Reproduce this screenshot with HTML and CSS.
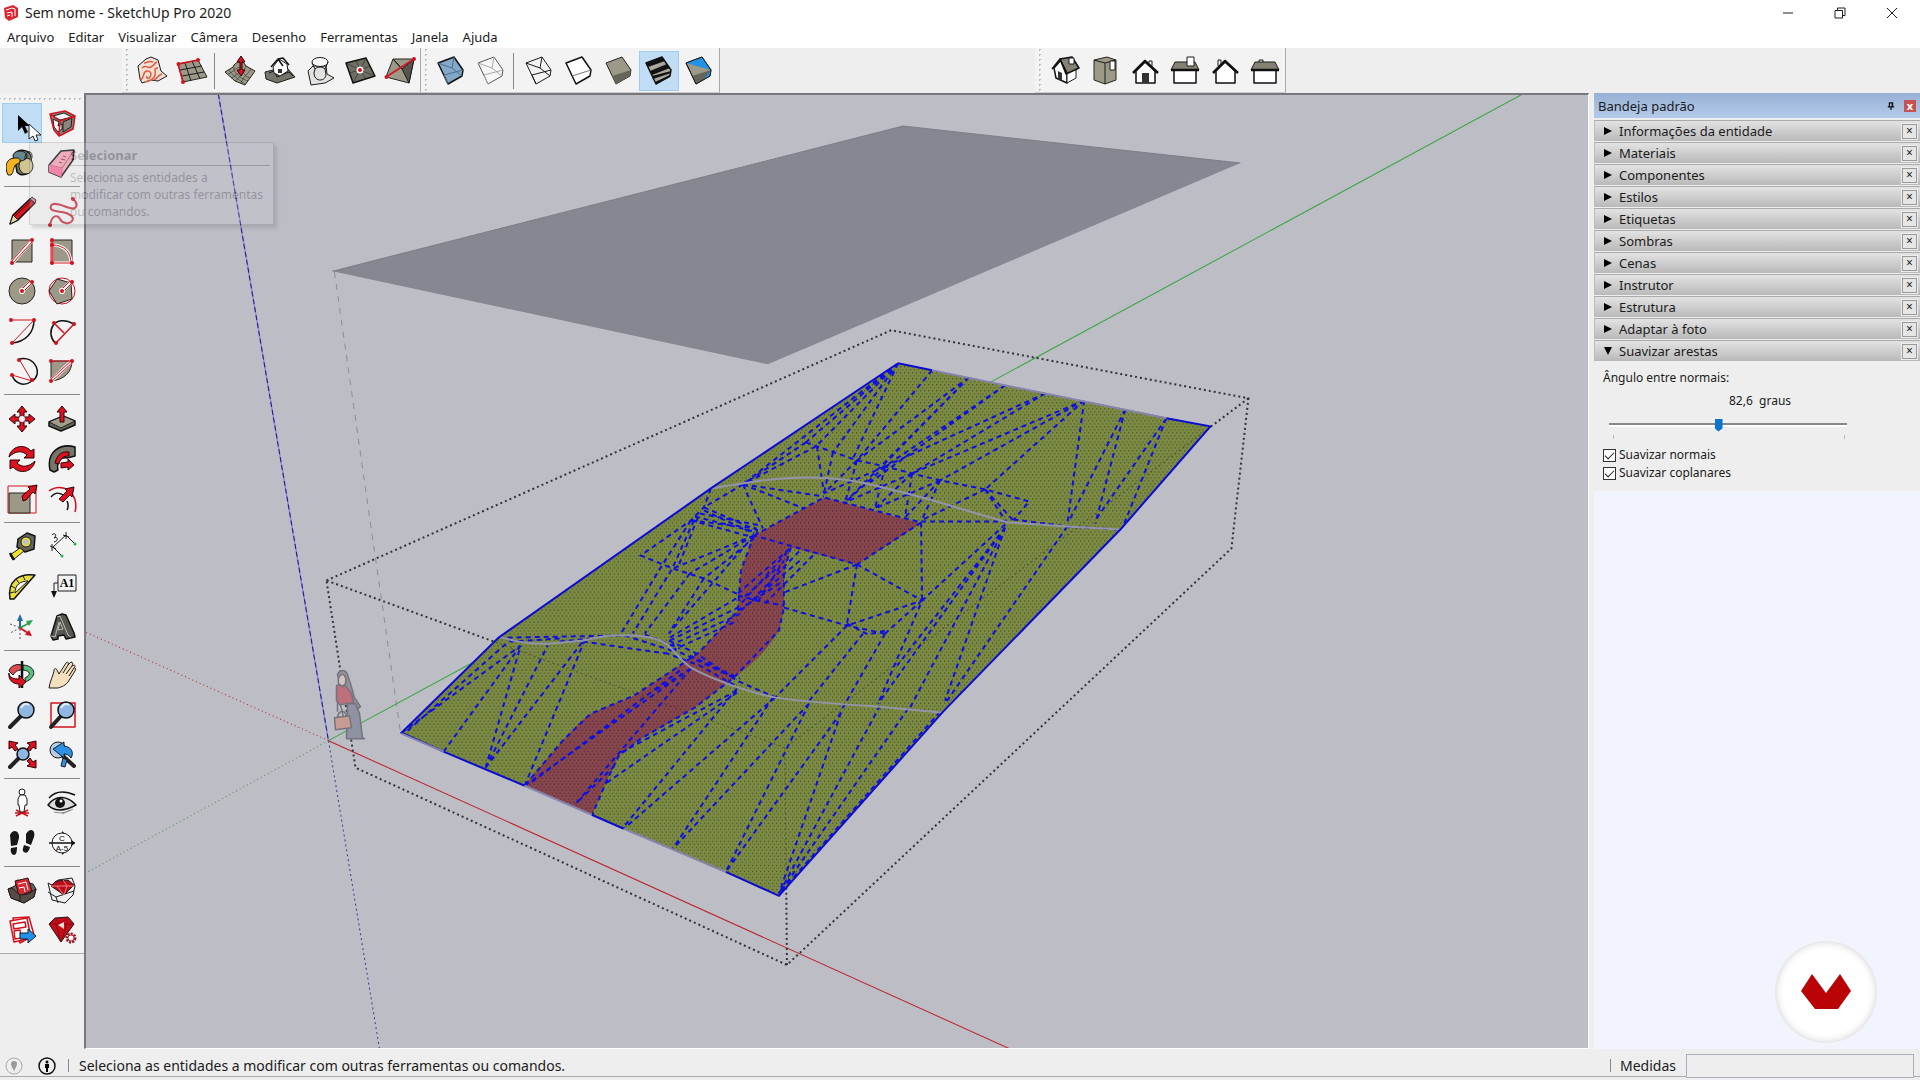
FILE: index.html
```html
<!DOCTYPE html>
<html lang="pt-BR">
<head>
    <meta charset="UTF-8">
    <meta name="viewport" content="width=device-width, initial-scale=1.0">
    <title>Sem nome - SketchUp Pro 2020</title>
    <link rel="stylesheet" href="styles.css">
</head>
<body>
    <header class="titlebar">
        <svg class="app-icon" viewBox="0 0 16 16"><path d="M1 3 10 0l5 3v9l-9 4-4-3z" fill="#d9252f"/><path d="M3 5l6-2 3 1v7M4 8l5-1v5M4 11l3-1" stroke="#fff" fill="none" stroke-width="1"/></svg>
        <h1>Sem nome - SketchUp Pro 2020</h1>
        <div class="window-buttons">
            <button aria-label="Minimizar"><svg viewBox="0 0 12 12"><path d="M1 6h10" class="k"/></svg></button>
            <button aria-label="Restaurar"><svg viewBox="0 0 12 12"><path d="M1 3.500h7.500v7.500H1zM3.500 3.500V1H11v7.500H8.500" class="k"/></svg></button>
            <button aria-label="Fechar"><svg viewBox="0 0 12 12"><path d="M1 1l10 10M11 1L1 11" class="k"/></svg></button>
        </div>
    </header>

    <nav class="menubar">
        <button>Arquivo</button>
        <button>Editar</button>
        <button>Visualizar</button>
        <button>Câmera</button>
        <button>Desenho</button>
        <button>Ferramentas</button>
        <button>Janela</button>
        <button>Ajuda</button>
    </nav>

    <div class="toolbars">
        <!-- caixa de areia -->
        <div class="toolbar">
            <button class="tool" aria-label="Usando contornos"><svg viewBox="0 0 32 32"><path d="M2 11l8-7 5-2 7 3 3 11 6 5-9 5-7-1-9 3-2-4z" fill="#eee0d5" class="k1"/><path d="M5 25c4-5 2-9 6-9s5 3 3 6-4 1-3-1M6 13c4-4 5 1 9-1s3-4 6-5M8 8c4 0 5-3 9-1M9 27c6-1 9-3 10-7s-2-7 3-7M18 25c4-2 4-5 8-6" class="o"/></svg></button>
            <button class="tool" aria-label="Usando rascunho"><svg viewBox="0 0 32 32"><path d="M2 9l20-4 9 17-24 5z" class="s"/><path d="M9 8l6 18M16 6l8 18M4 15l22-4M6 21l22-4" class="k1"/><path d="M7 27L2 9l20-4" class="rl2"/><circle cx="2.500" cy="9" r="2" class="r"/><circle cx="22" cy="5" r="2" class="r"/><circle cx="7" cy="27" r="2" class="r"/></svg></button>
            <span class="divider"></span>
            <button class="tool" aria-label="Suavizar"><svg viewBox="0 0 32 32"><path d="M1 17l8-5c2-6 11-7 13-1l9 5-10 14-10-4z" class="s"/><path d="M4 19c6-2 9-8 12-6s4 9 10 10M7 23c6-2 8-8 11-6M10 12c-1 5 5 11 14 14M22 11c-3 6-6 12-11 15M27 14c-3 5-8 8-10 14M5 15c2 4 9 9 16 14" class="k1 thin"/><path d="M17 1l4 6h-3v8h3l-4 6-4-6h3V7h-3z" class="ro"/></svg></button>
            <button class="tool" aria-label="Carimbar"><svg viewBox="0 0 32 32"><path d="M1 17l8-2 14-2 8 9-18 6-11-4z" fill="#77756a" class="k1"/><path d="M5 18l5-2 3 6 12-5 4 4" class="k1"/><path d="M9 12l6-8 8 5 1 7-8 5-6-3z" fill="#fff" class="k1"/><path d="M7 12l7-8 5 7M14 4l5-1 6 7" class="k2"/><path d="M14 14h4v4h-4z" fill="#333"/></svg></button>
            <button class="tool" aria-label="Projetar"><svg viewBox="0 0 32 32"><path d="M4 16l5-5h13l1 8 7 4-9 5-14 2z" fill="#e2e2de" class="k1"/><ellipse cx="16" cy="7" rx="8" ry="4.500" fill="#fafafa" class="k1"/><path d="M8 8l3 6-1 4c0 9 11 9 12 2l-1-6 3-7M11 14c3-3 8-2 10 0" class="k1"/></svg></button>
            <button class="tool" aria-label="Adicionar detalhe"><svg viewBox="0 0 32 32"><path d="M2 8l20-5 9 18-22 7z" fill="#706e62" class="k2"/><path d="M2 8l14 7L22 3M16 15l15 6M16 15L9 28M16 15L12 5M16 15l10-4M16 15l6 9M16 15L5 18" class="k1 thin"/><circle cx="16" cy="15" r="3.500" fill="#fff"/><circle cx="16" cy="15" r="2" class="r"/></svg></button>
            <button class="tool" aria-label="Virar aresta"><svg viewBox="0 0 32 32"><path d="M9 4L2 22l23 6 5-24z" class="s"/><path d="M9 4l9 10L30 4l-5 24-7-14z" fill="#57554b" class="k1"/><path d="M2 22L30 4" class="rl2"/><circle cx="2.500" cy="22" r="2" class="r"/><circle cx="30" cy="4" r="2" class="r"/></svg></button>
        </div>
        <!-- estilos de face -->
        <div class="toolbar">
            <button class="tool" aria-label="Raios X"><svg viewBox="0 0 32 32"><path d="M3 8l16-6 9 13-1 6-14 8z" fill="#84a9c8" class="k2"/><path d="M17 13l2-11M17 13l10 8M17 13L3 8M9 20l19-5M9 20l4 9" stroke="#4c6f8c" fill="none"/></svg></button>
            <button class="tool" aria-label="Arestas posteriores"><svg viewBox="0 0 32 32"><path d="M3 8l16-6 9 13-1 6-14 8z" fill="#f6f6f6" stroke="#555"/><path d="M17 13l2-11M17 13l10 8M17 13L3 8M9 20l19-5M9 20l4 9" stroke="#aaa" fill="none"/></svg></button>
            <span class="divider"></span>
            <button class="tool" aria-label="Aramado"><svg viewBox="0 0 32 32"><path d="M3 8l16-6 9 13-1 6-14 8zM17 13l2-11M17 13l10 8M17 13L3 8M9 20l19-5M9 20l4 9" class="k1"/></svg></button>
            <button class="tool" aria-label="Linhas ocultas"><svg viewBox="0 0 32 32"><path d="M3 8l16-6 9 13-1 6-14 8z" fill="#fff" class="k2"/><path d="M9 21l19-6" stroke="#777"/></svg></button>
            <button class="tool" aria-label="Sombreado"><svg viewBox="0 0 32 32"><path d="M3 8l16-6 9 13-1 6-14 8z" class="s"/><path d="M9 21l19-6-1 6-14 8z" fill="#67655a"/></svg></button>
            <button class="tool selected" aria-label="Sombreado com texturas"><svg viewBox="0 0 32 32"><path d="M3 8l16-6 9 13-1 6-14 8z" fill="#aaa69a" class="k2"/><path d="M3 8l16-6 3 4L5 12zM7 16l17-7 3 4L9 20zM9 21l19-5v2l-18 6zM12 27l15-7v2l-14 7z" fill="#111"/></svg></button>
            <button class="tool" aria-label="Monocromático"><svg viewBox="0 0 32 32"><path d="M3 8l16-6 9 13-1 6-14 8z" class="s"/><path d="M3 8l16-6 9 13z" fill="#2292e6"/><path d="M9 21l19-6-1 6-14 8z" fill="#67655a"/><path d="M28 15l-1 6-6 3z" fill="#2292e6"/><path d="M3 8l16-6 9 13-1 6-14 8z" class="k1"/></svg></button>
        </div>
        <!-- vistas -->
        <div class="toolbar views">
            <button class="tool" aria-label="Iso"><svg viewBox="0 0 32 32"><path d="M5 13l7-8 6 11v12L7 23z" fill="#fff" class="k2"/><path d="M18 16l9-4v11l-9 5z" fill="#fff" class="k1"/><path d="M11 4l12-2 7 11-13 6z" fill="#858174" class="k2"/><path d="M3 14l8-10 7 14" class="k2"/><path d="M9 16l4 2v8l-4-2z" fill="#333"/><path d="M20 3h5v6h-5z" fill="#fff" class="k1"/></svg></button>
            <button class="tool" aria-label="Topo"><svg viewBox="0 0 32 32"><path d="M5 5l13-3 9 3v20l-11 4-11-4z" class="s"/><path d="M16 8v21M5 5l11 3 11-3" class="k1"/><path d="M21 6h5v9h-5z" fill="#fff" class="k1"/></svg></button>
            <button class="tool" aria-label="Frente"><svg viewBox="0 0 32 32"><path d="M7 28V16l9-9 10 9v12z" fill="#fff" class="k2"/><path d="M4 18L16 6l13 12" class="k3"/><path d="M13 18h7v10h-7z" fill="#333"/><path d="M20 8V6h3v5" class="k1"/></svg></button>
            <button class="tool" aria-label="Direita"><svg viewBox="0 0 32 32"><path d="M5 15h22v13H5z" fill="#fff" class="k2"/><path d="M6 7h20l4 8H2z" fill="#858174" class="k1"/><path d="M2 15h28" class="k3"/><path d="M18 2h7v9h-7z" fill="#fff" class="k1"/></svg></button>
            <button class="tool" aria-label="Posterior"><svg viewBox="0 0 32 32"><path d="M7 28V16l9-9 10 9v12z" fill="#fff" class="k2"/><path d="M4 18L16 6l13 12" class="k3"/><path d="M9 11V5h3v4" class="k1"/></svg></button>
            <button class="tool" aria-label="Esquerda"><svg viewBox="0 0 32 32"><path d="M5 15h22v13H5z" fill="#fff" class="k2"/><path d="M6 7h20l4 8H2z" fill="#858174" class="k1"/><path d="M2 15h28" class="k3"/><path d="M10 7V5h4v2" class="k1"/></svg></button>
        </div>
    </div>

    <main class="workspace">
        <aside class="palette">
            <div class="tool-group">
                <button class="tool selected" aria-label="Selecionar"><svg viewBox="0 0 32 32"><path d="M12 8v16l4-4 3 7 3-2-3-6h5z" fill="#000"/></svg></button>
                <button class="tool" aria-label="Criar componente"><svg viewBox="0 0 32 32"><path d="M4 7l15-3 10 5-1 13-15 7-6-7z" fill="#8b887b"/><path d="M7 9l11-3 8 4-12 3zM7 12l6 3-1 4 4-2v5l-4 3-4-5z" fill="#f4f4f4" class="k1"/><path d="M17 15l9-4-1 9-8 5z" class="k1"/><path d="M4 7l15-3 10 5-15 5zM14 14l-1 15-5-6L4 7M29 9l-2 13-14 7" class="rl2"/></svg></button>
                <button class="tool" aria-label="Pintura"><svg viewBox="0 0 32 32"><path d="M8 8c4-7 16-6 17 2l1 10c-1 8-11 10-15 5z" fill="#777868" class="k2"/><ellipse cx="20" cy="19" rx="7" ry="8" fill="#cfc58e" class="k1"/><ellipse cx="14" cy="9" rx="7" ry="5" fill="#688891" class="k1"/><path d="M2 28c-4-8-2-17 7-17 7-1 6 5 2 6s-3 9-6 11z" fill="#f2b21e" class="k1"/><path d="M19 13c-1-9 8-12 7-2" class="k1"/></svg></button>
                <button class="tool" aria-label="Borracha"><svg viewBox="0 0 32 32"><path d="M3 18L15 4l13-1-1 10-12 17-12-5z" fill="#f6a1b5" class="k2"/><path d="M3 18l13 3L27 5M16 21l-1 9" stroke="#a15467" fill="none"/><path d="M3 18l13 3-1 9-12-5z" fill="#fb6f9c"/><path d="M13 15l3 1M15 12l4 1M17 9l3 1" stroke="#83334a"/></svg></button>
            </div>
            <div class="tool-group">
                <button class="tool" aria-label="Linha"><svg viewBox="0 0 32 32"><path d="M4 29l3-9L24 4l5 4-17 17z" fill="#d9161f" class="k2"/><path d="M7 20l5 5-8 4z" fill="#e9dda3" class="k1"/><path d="M24 4l2-2 4 3-1 3z" fill="#e3858b" class="k1"/><path d="M9 21L25 6" stroke="#5a0c0e"/></svg></button>
                <button class="tool" aria-label="Mão livre"><svg viewBox="0 0 32 32"><path d="M27 4c6 5 4 11-3 9C17 11 7 6 5 11s4 5 11 6 13 5 10 9-10 2-12-2-8-5-10 6" stroke="#c6303f" stroke-width="2" fill="none"/><circle cx="27" cy="4" r="2" class="r"/><circle cx="4" cy="30" r="2" class="r"/></svg></button>
                <button class="tool" aria-label="Retângulo"><svg viewBox="0 0 32 32"><path d="M6 5h20v22H6z" class="s"/><path d="M6 28L26 5" stroke="#fff" stroke-width="4"/><path d="M5 27L25 4M7 28L27 6" class="rl"/><circle cx="26" cy="5" r="2" class="r"/><circle cx="6" cy="28" r="2" class="r"/></svg></button>
                <button class="tool" aria-label="Retângulo girado"><svg viewBox="0 0 32 32"><path d="M6 5h20v23H6z" class="s"/><path d="M6 10c13 0 19 8 19 18H6V5" stroke="#fff" stroke-width="3" fill="none"/><path d="M6 10c13 0 19 8 19 18H6V5" class="rl"/><path d="M5 5h2v23H5z" class="rl"/><circle cx="6" cy="5" r="2" class="r"/><circle cx="6" cy="10" r="2" class="r"/><circle cx="6" cy="28" r="2" class="r"/><circle cx="26" cy="28" r="2" class="r"/></svg></button>
                <button class="tool" aria-label="Círculo"><svg viewBox="0 0 32 32"><circle cx="16" cy="16" r="13" class="s"/><path d="M16 16l9-9" stroke="#fff" stroke-width="4"/><path d="M15 15l9-9M17 17l9-9" class="rl"/><circle cx="16" cy="16" r="3" fill="#fff"/><circle cx="16" cy="16" r="2" class="r"/><circle cx="26" cy="7" r="2" class="r"/></svg></button>
                <button class="tool" aria-label="Polígono"><svg viewBox="0 0 32 32"><circle cx="16" cy="16" r="13" class="rl"/><path d="M3 16l8-12 14 4 1 16-15 5z" class="s"/><path d="M16 16l9-9" stroke="#fff" stroke-width="4"/><path d="M15 15l9-9M17 17l9-9" class="rl"/><circle cx="16" cy="16" r="3" fill="#fff"/><circle cx="16" cy="16" r="2" class="r"/><circle cx="26" cy="7" r="2" class="r"/></svg></button>
                <button class="tool" aria-label="Arco"><svg viewBox="0 0 32 32"><path d="M28 5c0 13-9 22-22 23" class="k2"/><path d="M5 5h23L6 28" class="rl"/><circle cx="5" cy="5" r="2" class="r"/><circle cx="28" cy="5" r="2" class="r"/><circle cx="6" cy="28" r="2" class="r"/></svg></button>
                <button class="tool" aria-label="Arco de dois pontos"><svg viewBox="0 0 32 32"><path d="M9 28C-1 17 8-2 28 9" class="k2"/><path d="M10 28L28 9M8 8l10 10" class="rl2"/><circle cx="8" cy="8" r="2" class="r"/><circle cx="28" cy="9" r="2" class="r"/><circle cx="10" cy="28" r="2" class="r"/></svg></button>
                <button class="tool" aria-label="Arco de três pontos"><svg viewBox="0 0 32 32"><path d="M13 4c17-4 24 16 13 22-9 7-18 1-20-6" class="k2"/><path d="M13 4l13 22L6 20" class="rl"/><circle cx="13" cy="5" r="2" class="r"/><circle cx="6" cy="20" r="2" class="r"/><circle cx="26" cy="25" r="2" class="r"/></svg></button>
                <button class="tool" aria-label="Pizza"><svg viewBox="0 0 32 32"><path d="M5 6h21c0 11-8 19-21 20z" class="s"/><path d="M5 26L26 6" stroke="#fff" stroke-width="4"/><path d="M5 6h21M4 25L26 5M5 27L27 7" class="rl"/><circle cx="5" cy="6" r="2" class="r"/><circle cx="26" cy="6" r="2" class="r"/><circle cx="5" cy="26" r="2" class="r"/></svg></button>
            </div>
            <div class="tool-group">
                <button class="tool" aria-label="Mover"><svg viewBox="0 0 32 32"><path d="M16 3l5 6h-3v5h5v-3l6 5-6 5v-3h-5v5h3l-5 6-5-6h3v-5H9v3l-6-5 6-5v3h5V9h-3z" class="ro"/><circle cx="16" cy="16" r="3" fill="#f3f3f3"/></svg></button>
                <button class="tool" aria-label="Empurrar/Puxar"><svg viewBox="0 0 32 32"><path d="M3 19l14-6 12 5v4l-14 6-12-5z" fill="#68665b" class="k2"/><path d="M3 19l14-6 12 5-14 7z" fill="#a19d8d" class="k1"/><path d="M16 3l5 6h-3v10h-4V9h-3z" class="ro"/></svg></button>
                <button class="tool" aria-label="Rotar"><svg viewBox="0 0 32 32"><path d="M3 14C5 3 18 0 25 8l3-2v9H18l3-3C16 7 9 8 3 14zM29 18c-2 11-15 14-22 6l-3 2v-9h10l-3 3c5 5 12 4 18-2z" class="ro"/></svg></button>
                <button class="tool" aria-label="Siga-me"><svg viewBox="0 0 32 32"><path d="M4 27C0 8 15 0 29 4v9l-8 2c-6-1-11 3-9 12l-4 2z" fill="#77756a" class="k2"/><path d="M9 20c2-9 8-12 14-11v4c-6 0-9 3-10 8z" class="ro"/><path d="M15 20l7-1v-3l6 6-6 5v-3l-7 1z" class="ro"/></svg></button>
                <button class="tool" aria-label="Escala"><svg viewBox="0 0 32 32"><path d="M2 3h28v27H2z" class="rl"/><path d="M3 10h21v20H3z" class="s"/><path d="M16 13l8-7-2-2 9-2-2 9-2-2-7 8-3 1z" class="ro"/></svg></button>
                <button class="tool" aria-label="Equidistância"><svg viewBox="0 0 32 32"><path d="M3 8C16-2 34 10 29 29" class="rl2"/><path d="M5 14c5-6 9-4 12-2M21 18c2 4 1 7 0 9" class="k2"/><path d="M13 16l8-8-2-2 9-2-2 10-2-2-7 7z" class="ro"/></svg></button>
            </div>
            <div class="tool-group">
                <button class="tool" aria-label="Fita métrica"><svg viewBox="0 0 32 32"><path d="M12 8l9-6 8 3-1 13-9 3-8-5z" fill="#63625b" class="k2"/><circle cx="20" cy="11" r="5" fill="#f0e22c" class="k1"/><circle cx="20" cy="11" r="3" fill="#bcc3c7"/><path d="M14 17l4 3L7 29l-3-5z" fill="#f0e22c" class="k1"/><path d="M4 22l4 7" class="k3"/></svg></button>
                <button class="tool" aria-label="Dimensão"><svg viewBox="0 0 32 32"><path d="M7 16L20 4M20 4l9 9M7 16l9 9M4 15l6 3M17 4l6 2M20 1v7M6 13v7" class="k1"/><path d="M6 4c2-3 6 0 2 3 4-2 5 3 0 4" class="k1"/><circle cx="29" cy="13" r="1.500" fill="#2daf42"/><circle cx="16" cy="25" r="1.500" fill="#2daf42"/></svg></button>
                <button class="tool" aria-label="Transferidor"><svg viewBox="0 0 32 32"><path d="M4 28C1 10 13 2 29 4L8 28z" fill="#e9dd44" class="k2"/><path d="M9 22c0-8 5-12 13-12z" fill="#f3f3f3" class="k1"/><path d="M4 22l4-1M5 15l4 2M10 8l3 4M17 5l2 4" class="k1"/></svg></button>
                <button class="tool" aria-label="Texto"><svg viewBox="0 0 32 32"><path d="M12 4h18v16H12zM12 12H8v10" fill="none" class="k1"/><path d="M5 20h6l-3 7z" fill="#111"/><text x="21" y="16" text-anchor="middle" class="serif-label">A1</text></svg></button>
                <button class="tool" aria-label="Eixos"><svg viewBox="0 0 32 32"><path d="M4 13l11 4M14 18v10M14 17L4 22" stroke="#555" stroke-dasharray="2 2"/><path d="M14 17V8" stroke="#2469a8" stroke-width="2"/><path d="M14 3l3 7h-6z" fill="#2469a8"/><path d="M14 17l9-5" stroke="#2fa152" stroke-width="2"/><path d="M27 9l-7 1 3 5z" fill="#2fa152"/><path d="M14 17l8 5" stroke="#d3121f" stroke-width="2"/><path d="M26 25l-7-1 4-5z" class="r"/></svg></button>
                <button class="tool" aria-label="Texto 3D"><svg viewBox="0 0 32 32"><path d="M5 25l6-20 5-2 4 1 8 18 1 4-9 2-2-4-6 1v3l-5 1z" fill="#565650" class="k2"/><path d="M11 6l3-1 8 19 3 2M14 11l3 7-5 1zM5 25l4 1 4-15" stroke="#bbb" fill="none"/></svg></button>
            </div>
            <div class="tool-group">
                <button class="tool" aria-label="Orbitar"><svg viewBox="0 0 32 32"><path d="M3 12c2-7 10-7 13-6v5c-5 0-7 2-9 5z" fill="#dd4b51" class="k1"/><path d="M17 6c14 1 14 13 2 17v-4c6-3 6-7-2-8z" fill="#58bd7b" class="k1"/><path d="M16 2v27" class="k3"/><path d="M3 14c0 5 5 6 10 6v-4l7 7-7 6v-4C6 25 2 20 3 14z" class="ro"/></svg></button>
                <button class="tool" aria-label="Panorâmica"><svg viewBox="0 0 32 32"><path d="M3 29c1-7 4-12 5-17 0-3 2-3 3-1l2 4 7-11c2-2 3 0 2 2l3-3c2 0 2 2 1 4 3-2 4 0 2 2 2-1 2 2 1 3l-7 11c-4 5-8 5-10 6z" fill="#f4dfbe" class="k1"/><path d="M17 14l5-8M20 15l6-8M23 17l5-8" class="k1"/></svg></button>
                <button class="tool" aria-label="Zoom"><svg viewBox="0 0 32 32"><path d="M4 28L15 17" class="k5"/><circle cx="20" cy="11" r="8" fill="#8fb7e1" class="k2"/><path d="M15 9c2-4 5-5 8-3" stroke="#dceafc" stroke-width="2" fill="none"/></svg></button>
                <button class="tool" aria-label="Janela de zoom"><svg viewBox="0 0 32 32"><path d="M5 4h24v24H5z" class="rl2"/><path d="M5 28L15 17" class="k5"/><circle cx="20" cy="11" r="8" fill="#8fb7e1" class="k2"/><path d="M15 9c2-4 5-5 8-3" stroke="#dceafc" stroke-width="2" fill="none"/></svg></button>
                <button class="tool" aria-label="Modelo centralizado"><svg viewBox="0 0 32 32"><path d="M4 28l9-9" class="k5"/><circle cx="17" cy="15" r="6" fill="#8fb7e1" class="k2"/><path d="M3 2l9 2-3 2 3 4-3 2-3-4-3 2zM30 2l-9 2 3 2-3 4 3 2 3-4 3 2zM30 29l-9-2 3-2-3-3 3-3 3 4 3-2z" class="ro"/></svg></button>
                <button class="tool" aria-label="Anterior"><svg viewBox="0 0 32 32"><circle cx="12" cy="11" r="8" fill="#b3cde7" class="k1"/><path d="M17 17l11 10" class="k5"/><path d="M7 10l11-7v4c8 1 10 7 7 12-2-3-4-4-7-4v4zM17 19l-2 8 4 1 2-7z" fill="#2d91e6" class="k1"/></svg></button>
            </div>
            <div class="tool-group">
                <button class="tool" aria-label="Posicionar câmera"><svg viewBox="0 0 32 32"><path d="M10 23l12 6M22 23l-12 6M9 26h14" class="rl2"/><circle cx="16" cy="5" r="3" fill="#fff" class="k1"/><path d="M14 8h5l2 4v6h-2l-1 7h-4l-1-7h-1v-6z" fill="#fff" class="k1"/></svg></button>
                <button class="tool" aria-label="Girar"><svg viewBox="0 0 32 32"><path d="M3 11C11 2 22 5 29 8" class="k2"/><path d="M2 18c8-11 20-9 28 0-9 5-20 8-28 0z" fill="#ddd" class="k2"/><circle cx="14" cy="16" r="5" fill="#111"/><circle cx="15" cy="14" r="1.500" fill="#fff"/><path d="M8 25c8 2 14 0 19-3M16 27l8-4" stroke="#888" fill="none"/></svg></button>
                <button class="tool" aria-label="Caminhar"><svg viewBox="0 0 32 32"><path d="M4 8c3-7 10-4 9 3l-2 7-6 1zM5 21l6-1c0 5-1 8-3 8s-4-3-3-7zM20 7c4-7 10-4 8 3l-3 8-5-2zM18 18l6 2c-1 5-4 7-6 5-2-1-1-4 0-7z" fill="#171717"/></svg></button>
                <button class="tool" aria-label="Plano de seção"><svg viewBox="0 0 32 32"><path d="M16 4l13 12-13 12z" fill="#111"/><circle cx="16" cy="16" r="10" fill="#fafafa" class="k1"/><path d="M3 16h26" class="k2"/><text x="16" y="14" text-anchor="middle" class="tiny-label">C</text><text x="16" y="24" text-anchor="middle" class="tiny-label">A-5</text></svg></button>
            </div>
            <div class="tool-group">
                <button class="tool" aria-label="3D Warehouse"><svg viewBox="0 0 32 32"><path d="M2 14l7-3 2-6 16 4 3 5-2 8-10 6-13-5z" fill="#6e5f57" class="k1"/><path d="M9 6l13-3 4 13-13 5z" fill="#d8272f" class="k1"/><path d="M12 9l8-2 2 8M13 13l5-1 1 5" stroke="#fff" fill="none"/><path d="M2 14l4-1 8 7 8-1 8-5-2 8-10 6-13-5z" fill="#574c45" class="k1"/><path d="M14 20v7" class="k1"/></svg></button>
                <button class="tool" aria-label="Extension Warehouse"><svg viewBox="0 0 32 32"><path d="M2 8l6 3 4-6 14-2 3 8-2 9-8 8-13-3z" fill="#eee" class="k1"/><path d="M2 17l8 5 18-6M10 22l2 6" class="k1"/><path d="M5 11l5-5 12-1 6 5-10 10z" fill="#b50e18" class="k1"/><path d="M5 11h23M11 11l7 9 3-9-4-6" stroke="#ff787c" fill="none"/></svg></button>
                <button class="tool" aria-label="Enviar ao LayOut"><svg viewBox="0 0 32 32"><path d="M7 3l16-1 5 18-14 8z" fill="#fff" class="rl2"/><path d="M4 6l17-3 4 20-17 4z" fill="#fff" class="rl2"/><path d="M7 9l12-2 1 5-12 2zM8 16l6-1 1 8-6 1z" class="rl2"/><path d="M14 18h8v-4l8 7-8 7v-4h-8z" fill="#2191ed" class="k1"/></svg></button>
                <button class="tool" aria-label="Gerenciador de extensões"><svg viewBox="0 0 32 32"><path d="M3 9l6-6 13-1 6 7-13 18z" fill="#c20d18" class="k1"/><path d="M3 9h25M10 9l5 18 6-18M9 3l5 6 8-7" stroke="#8d0710" fill="none"/><path d="M12 10l6-3v7z" fill="#ffd7d4"/><circle cx="25" cy="23" r="4" fill="#eee" stroke="#8e1822" stroke-width="3" stroke-dasharray="2 1"/><circle cx="25" cy="23" r="3" stroke="#c32631" fill="#fff"/></svg></button>
            </div>

            <div class="tooltip" role="tooltip">
                <strong>Selecionar</strong>
                <p>Seleciona as entidades a<br>modificar com outras ferramentas<br>ou comandos.</p>
            </div>
            <svg class="cursor" viewBox="0 0 14 20"><path d="M1 1v15l4-3 2 5 3-1-2-5h5z" fill="#fff" stroke="#222"/></svg>
        </aside>

        <section class="viewport">
            <!-- o viewBox usa coordenadas da tela -->
            <svg viewBox="86 95 1502 952" preserveAspectRatio="xMidYMid slice">
                <defs>
                    <pattern id="dots" width="4" height="6" patternUnits="userSpaceOnUse">
                        <rect x="0" y="0" width="1" height="1"/>
                        <rect x="2" y="3" width="1" height="1"/>
                    </pattern>
                    <clipPath id="land"><path d="M402 732L499 637 711 488 898 363 1210 426 1121 528 943 711 779 895z"/></clipPath>
                </defs>

                <!-- eixos -->
                <path d="M219 94L329 740" stroke="#8f8ad8" stroke-width="1.500"/>
                <path d="M219 94L329 740" stroke="#1c1a86" stroke-dasharray="5 3"/>
                <path d="M329 740L380 1048" stroke="#3a379e" stroke-dasharray="2 3"/>
                <path d="M329 740L1010 1048" stroke="#bd2028"/>
                <path d="M329 740L85 631" stroke="#bd2028" stroke-dasharray="1 3"/>
                <path d="M329 740L1522 94" stroke="#35a53b"/>
                <path d="M329 740L85 873" stroke="#4c8f50" stroke-dasharray="1 3"/>

                <path d="M333 271L903 126 1240 163 768 364z" fill="#858891"/>
                <path d="M333 271L903 126 1240 163" stroke="#7c7e87" fill="none"/>
                <path d="M335 272L401 732" stroke="#8d8d95" stroke-dasharray="6 6"/>

                <!-- caixa envolvente -->
                <path class="bbox" d="M327 580L891 330 1248 398 1231 548 787 964 356 767zM1248 398L785 747 327 580M785 747L787 964"/>

                <!-- terreno -->
                <g clip-path="url(#land)">
                    <rect x="400" y="360" width="812" height="540" fill="#7c8b44"/>
                    <path fill="#88474f" d="M754 535L763 530 825 497 921 523 857 564 791 547 784 570 784 607 779 630Q765 655 734 677L695 707 641 738 619 755 607 780 592 815 525 785 531 777 563 740Q580 720 591 713L634 695 677 667 699 652 738 610 741 570z"/>
                    <rect x="400" y="360" width="812" height="540" fill="url(#dots)" opacity=".6"/>
                    <path class="bbox hidden-line" d="M1248 398L785 747 327 580M785 747L787 964"/>
                    <path class="mesh" d="M898 363L806 442M898 363L743 484M898 363L816 446M898 363L833 452M898 363L853 458M806 442L743 484M816 446L743 484
                        M932 370L857 460M969 377L857 460M969 377L883 465M969 377L847 500M1005 385L885 466M1005 385L870 482M1045 393L885 466M1045 393L912 473
                        M1084 400L912 473M1084 400L940 480M1084 400L985 489M1084 400L1067 524M1125 409L1069 520M1125 409L1095 523M1166 418L1095 520M1166 418L1122 528
                        M806 442L817 446 857 460 885 466 912 473 940 480 985 489 1029 501 1013 520M985 489L1005 520M985 489L921 520M985 489L1013 520M921 521L1008 521M1013 519L1067 526 1117 529
                        M817 446L824 493M833 452L824 493M857 460L824 493M857 460L845 502M885 466L824 493M885 466L845 502M885 466L875 508M912 473L845 502M912 473L875 508M940 480L875 508M940 480L905 517M940 480L921 521M912 473L905 517
                        M743 484L824 496M743 484L804 508M743 484L763 528M743 484L704 507
                        M754 535L824 497 921 522 857 564z
                        M921 522L922 600M857 564L922 600 847 625M857 564L847 623M857 564L784 592M922 600L885 633M784 607L847 625 885 633M847 623L868 634 885 630
                        M1005 524L922 600 878 703M885 633L840 712M863 633L807 703M847 625L775 697M1005 527L878 703M1005 527L910 707M1005 527L945 700M1067 526L945 703M1005 527L897 665
                        M775 697L624 828M737 688L624 826M809 703L673 848M773 697L673 848M809 703L726 871M841 712L726 871M841 712L779 893M880 705L779 893M908 708L779 893M940 711L779 893
                        M737 690L619 753M737 692L607 782M691 668L525 785M680 670L530 783M691 668L576 803M615 765L576 803
                        M402 732L521 645M408 730L510 640M444 751L521 645M486 767L521 645M486 767L548 645M486 767L583 641M525 785L584 642
                        M508 637L620 635M510 641L560 638M583 641L667 653M560 641L590 638M625 635L672 650M645 634L680 648
                        M711 488L704 507 691 520 641 555 673 568 704 578 741 595M704 507L758 530M704 510L754 533M691 520L757 528M695 516L758 532M691 520L754 537M700 513L760 525
                        M691 520L659 570 620 635M694 520L673 567 633 633M698 517L678 567M690 573L645 633M704 578L669 633M754 535L673 568M754 535L690 573M754 538L704 578M754 535L669 633
                        M670 637L738 597M670 640L738 607M670 645L741 613M672 650L738 620
                        M754 535L741 570 738 610 699 652 677 667 634 695 591 713 563 740 525 785M791 547L784 570 784 607 779 630 734 677 695 707 641 738 619 755 607 780 592 815
                        M738 593L790 548M742 602L787 552M752 600L800 550M758 601L784 560M765 603L813 555M741 610L800 560M738 595L757 600 784 605M745 596L780 565M738 610L784 580
                        M669 640L695 652 737 680 776 697M672 648L734 677M690 655L740 678M665 652L700 665 737 686M691 668L655 690"/>
                    <path class="contour" d="M711 488Q728 485 749 482Q800 474 843 479Q865 482 883 487Q908 493 933 500L973 512 1008 522 1067 526 1121 529"/>
                    <path class="contour" d="M500 636Q522 644 551 643Q575 641 584 640Q600 636 612 635Q650 633 666 643C680 655 680 660 691 667C715 680 750 692 776 697Q810 702 880 706L943 712"/>
                </g>
                <path class="edge" d="M444 751L402 732 499 637 711 488 898 363M898 363L932 370M1166 418L1210 426 1121 528 943 711 779 895 726 871M444 751L525 785M592 814L624 828"/>
                <path class="edge soft" d="M932 370L1166 418M402 733L444 751M525 785L592 814M624 828L726 871"/>

                <!-- figura humana -->
                <g stroke="#74747c" stroke-width="1.500" stroke-linejoin="round">
                    <path d="M338 674c2-5 8-6 10 0l3 9 4 14 6 9-4 3-12-8z" fill="#94919a"/>
                    <path d="M347 738l1-35h8l4 10 3 24 2 1z" fill="#8e92a2"/>
                    <path d="M337 685l4-2 6 3 5 7 2 9-14 2-3-4z" fill="#bd6f7c"/>
                    <path d="M339 683c-1-5 1-9 4-9s4 5 3 9l-3 3z" fill="#d2c2c2"/>
                    <path d="M338 700v11M341 704l3 12" fill="none"/>
                    <path d="M335 717l15-2 2 12-16 2z" fill="#c99c92"/>
                    <path d="M338 717c1-8 8-8 9-1" fill="none"/>
                </g>
            </svg>
        </section>

        <aside class="tray">
            <div class="tray-title">
                <h2>Bandeja padrão</h2>
                <button class="pin" aria-label="Fixar"><svg viewBox="0 0 10 10"><path d="M3 1h4v5H3zM1 6h8M5 6v4M6.500 1v5" class="k2"/></svg></button>
                <button class="tray-close" aria-label="Fechar">x</button>
            </div>
            <ul class="panels">
                <li><button class="panel-name">Informações da entidade</button><button class="panel-close" aria-label="Fechar">×</button></li>
                <li><button class="panel-name">Materiais</button><button class="panel-close" aria-label="Fechar">×</button></li>
                <li><button class="panel-name">Componentes</button><button class="panel-close" aria-label="Fechar">×</button></li>
                <li><button class="panel-name">Estilos</button><button class="panel-close" aria-label="Fechar">×</button></li>
                <li><button class="panel-name">Etiquetas</button><button class="panel-close" aria-label="Fechar">×</button></li>
                <li><button class="panel-name">Sombras</button><button class="panel-close" aria-label="Fechar">×</button></li>
                <li><button class="panel-name">Cenas</button><button class="panel-close" aria-label="Fechar">×</button></li>
                <li><button class="panel-name">Instrutor</button><button class="panel-close" aria-label="Fechar">×</button></li>
                <li><button class="panel-name">Estrutura</button><button class="panel-close" aria-label="Fechar">×</button></li>
                <li><button class="panel-name">Adaptar à foto</button><button class="panel-close" aria-label="Fechar">×</button></li>
                <li><button class="panel-name open">Suavizar arestas</button><button class="panel-close" aria-label="Fechar">×</button></li>
            </ul>
            <div class="soften">
                <label for="angle">Ângulo entre normais:</label>
                <output for="angle">82,6&nbsp; graus</output>
                <input type="range" id="angle" min="0" max="180" step="0.1" value="82.6">
                <div class="ticks"><span></span><span></span></div>
                <div class="check"><input type="checkbox" id="normals" checked><label for="normals">Suavizar normais</label></div>
                <div class="check"><input type="checkbox" id="coplanar" checked><label for="coplanar">Suavizar coplanares</label></div>
            </div>
            <div class="badge">
                <svg viewBox="0 0 50 36"><path d="M11 0l14 19L39 0l11 17-13 18H14L0 17z" fill="#b90306"/></svg>
            </div>
        </aside>
    </main>

    <footer class="statusbar">
        <button aria-label="Geolocalização"><svg viewBox="0 0 18 18"><circle cx="9" cy="9" r="8" fill="none" stroke="#aaa"/><path d="M9 15c0-3-3-5-3-8a3 3 0 0 1 6 0c0 3-3 5-3 8z" fill="#999"/></svg></button>
        <button aria-label="Créditos"><svg viewBox="0 0 18 18"><circle cx="9" cy="9" r="8" fill="none" stroke="#111" stroke-width="1.500"/><circle cx="9" cy="5" r="1.500"/><path d="M7 7h4v4h-1v4H8v-4H7z"/></svg></button>
        <p>Seleciona as entidades a modificar com outras ferramentas ou comandos.</p>
        <label for="measure">Medidas</label>
        <input type="text" id="measure">
    </footer>
</body>
</html>
```

FILE: styles.css
```css
* {
    box-sizing: border-box;
}
body {
    margin: 0;
    height: 100vh;
    display: flex;
    flex-direction: column;
    overflow: hidden;
    font-family: "Noto Sans", "Open Sans", sans-serif;
    font-size: 13px;
    color: #1b1b1b;
    background-color: #eee;
}
h1, h2, p, ul {
    margin: 0;
    padding: 0;
    font-weight: normal;
}
button {
    font: inherit;
    color: inherit;
    background: none;
    border: none;
    padding: 0;
}
svg {
    display: block;
}

/* barra de título e menus */
.titlebar {
    display: flex;
    align-items: center;
    height: 26px;
    padding: 0 2px 0 3px;
    background-color: #fff;
}
.app-icon {
    width: 16px;
    height: 16px;
    margin-right: 6px;
}
.titlebar h1 {
    font-size: 14px;
    line-height: 26px;
}
.window-buttons {
    display: flex;
    margin-left: auto;
}
.window-buttons button {
    width: 52px;
    height: 24px;
    display: flex;
    justify-content: center;
    align-items: center;
}
.window-buttons svg {
    width: 12px;
    height: 12px;
}
.menubar {
    display: flex;
    gap: 14px;
    height: 22px;
    padding-left: 7px;
    background-color: #fff;
}
.menubar button {
    font-size: 13px;
    line-height: 22px;
}

/* barras de ferramentas */
.toolbars {
    display: flex;
    height: 45px;
    padding-left: 122px;
}
.toolbar {
    display: flex;
    align-items: center;
    padding: 2px 0 0 10px;
    background: radial-gradient(circle, #bbb 1px, transparent 1px) 2px 4px / 5px 5px repeat-y #f3f3f3;
    border-right: 1px solid #aaa;
    border-bottom: 1px solid #ccc;
}
.toolbar.views {
    margin-left: 315px;
}
.divider {
    width: 8px;
    height: 36px;
    background: linear-gradient(#888, #888) 2px 0 / 1px 100% no-repeat;
}
.tool {
    width: 40px;
    height: 40px;
    display: flex;
    justify-content: center;
    align-items: center;
    border: 1px solid transparent;
}
.tool.selected {
    background-color: #c0ddf5;
    border-color: #9fcbee;
}
.tool svg {
    width: 32px;
    height: 32px;
    stroke-linejoin: round;
}

/* traços comuns dos ícones */
.k, .k1 {
    stroke: #1c1c1c;
    stroke-width: 1;
}
.thin {
    stroke-width: .5;
}
.k2 {
    stroke: #111;
    stroke-width: 1.5;
}
.k3 {
    stroke: #111;
    stroke-width: 2.5;
}
.k5 {
    stroke: #222;
    stroke-width: 4;
    stroke-linecap: round;
}
.k:not([fill]), .k1:not([fill]), .k2:not([fill]), .k3:not([fill]) {
    fill: none;
}
.s {
    fill: #9c9988;
    stroke: #26261f;
    stroke-width: 1;
}
.r {
    fill: #d3121f;
}
.ro {
    fill: #dd1220;
    stroke: #2b0508;
}
.rl, .rl2 {
    stroke: #d3121f;
}
.rl2 {
    stroke-width: 1.5;
}
.rl:not([fill]), .rl2:not([fill]) {
    fill: none;
}
.o {
    fill: none;
    stroke: #df5c40;
    stroke-width: 1.5;
}
.serif-label {
    font: bold 12px "Liberation Serif", serif;
}
.tiny-label {
    font: 8px "Liberation Sans", sans-serif;
}

/* área principal */
.workspace {
    flex: 1;
    min-height: 0;
    display: flex;
}
.palette {
    position: relative;
    align-self: flex-start;
    width: 84px;
    padding: 10px 2px 2px;
    background: radial-gradient(circle, #bbb 1px, transparent 1px) 2px 3px / 5px 5px repeat-x #f3f3f3;
    border-bottom: 1px solid #aaa;
}
.tool-group {
    display: grid;
    grid-template-columns: 40px 40px;
}
.tool-group + .tool-group {
    padding-top: 8px;
    background: linear-gradient(#888, #888) 2px 3px / 76px 1px no-repeat;
}
.tooltip {
    position: absolute;
    left: 29px;
    top: 49px;
    width: 245px;
    height: 83px;
    padding: 2px 3px 3px 40px;
    color: #000;
    background-color: #d0d0d8;
    border: 1px solid #666;
    box-shadow: 3px 3px 3px #666;
    opacity: .22;
    z-index: 1;
}
.tooltip strong {
    display: block;
    line-height: 20px;
    margin-bottom: 3px;
    border-bottom: 1px solid #222;
}
.tooltip p {
    font-size: 12px;
    line-height: 17px;
    white-space: nowrap;
}
.cursor {
    position: absolute;
    left: 28px;
    top: 30px;
    width: 14px;
    height: 20px;
    z-index: 2;
}
.viewport {
    flex: 1;
    min-width: 0;
    background-color: #bdbdc6;
    border: 2px solid #77777c;
    border-right: 1px solid #fff;
    border-bottom: 1px solid #fff;
}
.viewport svg {
    width: 100%;
    height: 100%;
    fill: #000;
}
.bbox {
    fill: none;
    stroke: #33333a;
    stroke-width: 2;
    stroke-dasharray: 2 3;
}
.hidden-line {
    stroke-width: 1;
    opacity: .6;
}
.mesh {
    fill: none;
    stroke: #0f0fe0;
    stroke-width: 2;
    stroke-dasharray: 5 4;
}
.contour {
    fill: none;
    stroke: #9494a8;
    stroke-width: 2;
}
.edge {
    fill: none;
    stroke: #0c0cd0;
    stroke-width: 2;
}
.edge.soft {
    stroke: #8684ad;
}

/* bandeja */
.tray {
    position: relative;
    width: 326px;
    margin-left: 5px;
    background-color: #f1f4fd;
}
.tray-title {
    display: flex;
    align-items: center;
    gap: 9px;
    height: 25px;
    padding: 0 4px;
    background: linear-gradient(#97b1d4, #b4caea);
}
.tray-title h2 {
    flex: 1;
    font-size: 13px;
}
.pin svg {
    width: 8px;
    height: 10px;
}
.tray-close {
    width: 12px;
    height: 12px;
    font-size: 11px;
    line-height: 10px;
    font-weight: bold;
    color: #fff;
    background-color: #c75050;
}
.panels {
    display: grid;
    gap: 1px;
    padding-top: 2px;
    list-style: none;
    background-color: #eee;
}
.panels li {
    display: flex;
    align-items: center;
    height: 21px;
    padding-right: 3px;
    background: linear-gradient(#e3e3e3, #b9b9b9);
    border-top: 1px solid #aaa;
    border-left: 1px solid #bbb;
}
.panel-name {
    flex: 1;
    display: flex;
    align-items: center;
    padding-left: 9px;
    text-align: left;
    line-height: 20px;
}
.panel-name::before {
    content: "";
    width: 8px;
    height: 8px;
    margin-right: 7px;
    background-color: #000;
    clip-path: polygon(0 0, 100% 50%, 0 100%);
}
.panel-name.open::before {
    clip-path: polygon(0 0, 100% 0, 50% 100%);
}
.panel-close {
    width: 15px;
    height: 15px;
    font-size: 12px;
    line-height: 12px;
    background-color: #e6e6e6;
    border: 1px solid #999;
    outline: 1px solid #eee;
}
.soften {
    display: flex;
    flex-direction: column;
    align-items: flex-start;
    height: 130px;
    padding: 8px 0 0 9px;
    font-size: 12px;
    background-color: #eee;
}
.soften label {
    line-height: 18px;
}
.soften output {
    margin: 5px 0 0 126px;
    line-height: 18px;
}
.soften input[type="range"] {
    appearance: none;
    width: 238px;
    height: 14px;
    margin: 8px 0 0 6px;
    background: linear-gradient(#888 0 2px, #fff 2px 4px) 0 5px / 100% 4px no-repeat;
}
.soften input[type="range"]::-webkit-slider-thumb {
    appearance: none;
    width: 8px;
    height: 13px;
    background-color: #0a74d0;
    clip-path: polygon(0 0, 100% 0, 100% 75%, 50% 100%, 0 75%);
}
.ticks {
    display: flex;
    justify-content: space-between;
    width: 232px;
    height: 4px;
    margin: 3px 0 7px 10px;
}
.ticks span {
    width: 1px;
    background-color: #bbb;
}
.check {
    display: flex;
    align-items: center;
    gap: 3px;
    height: 18px;
}
.check input {
    appearance: none;
    width: 13px;
    height: 13px;
    margin: 0;
    background-color: #fff;
    border: 1px solid #333;
}
.check input:checked::after {
    content: "";
    display: block;
    width: 8px;
    height: 4px;
    margin: 2px 0 0 1px;
    border-left: 1px solid #222;
    border-bottom: 1px solid #222;
    transform: rotate(-45deg);
}
.badge {
    position: absolute;
    right: 43px;
    bottom: 6px;
    width: 102px;
    height: 102px;
    display: flex;
    justify-content: center;
    align-items: center;
    background-color: #fff;
    border-radius: 50%;
    box-shadow: inset 0 0 8px #ccc;
}
.badge svg {
    width: 50px;
    height: 36px;
}

/* barra de status */
.statusbar {
    display: flex;
    align-items: center;
    height: 31px;
    padding: 4px 6px 2px 5px;
    font-size: 14px;
    background: linear-gradient(#aaa, #aaa) 0 27px / 100% 1px no-repeat #eee;
}
.statusbar svg {
    width: 18px;
    height: 18px;
}
.statusbar button {
    margin-right: 15px;
}
.statusbar p {
    flex: 1;
    padding-left: 11px;
    margin-left: -3px;
    background: linear-gradient(#888, #888) 0 3px / 1px 13px no-repeat;
}
.statusbar label {
    padding: 0 10px;
    background: linear-gradient(#888, #888) 0 3px / 1px 13px no-repeat;
}
.statusbar input {
    width: 228px;
    height: 24px;
    background-color: #eee;
    border: 1px solid #aab0c0;
}
```
